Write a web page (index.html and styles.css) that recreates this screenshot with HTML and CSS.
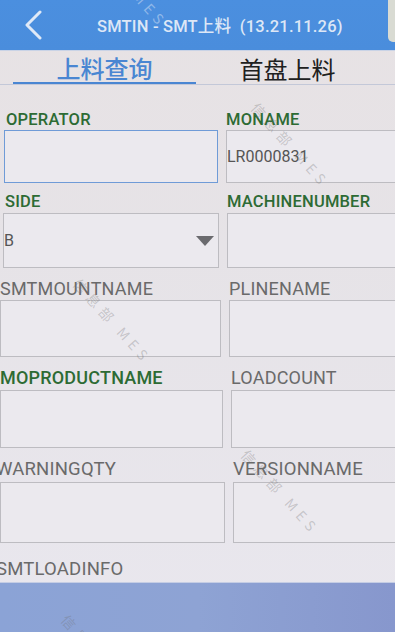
FILE: index.html
```html
<!DOCTYPE html>
<html lang="zh">
<head>
<meta charset="utf-8">
<title>SMTIN - SMT上料</title>
<link rel="stylesheet" href="styles.css">
</head>
<body>
<div class="screen">
  <header class="appbar">
    <svg class="back" width="20" height="30" viewBox="0 0 20 30" aria-hidden="true">
      <polyline points="16,2 3,15 16,28" fill="none" stroke="#dfe9f7" stroke-width="3" stroke-linecap="round" stroke-linejoin="round"/>
    </svg>
    <h1 class="title">SMTIN - SMT上料&nbsp; (13.21.11.26)</h1>
    <div class="bezel"></div>
  </header>

  <nav class="tabs">
    <div class="tab active">上料查询</div>
    <div class="tab">首盘上料</div>
  </nav>

  <main class="form">
    <div class="row">
      <div class="field"><div class="lbl req">OPERATOR</div><div class="box focus"></div></div>
      <div class="field"><div class="lbl req">MONAME</div><div class="box">LR0000831</div></div>
    </div>
    <div class="row">
      <div class="field"><div class="lbl req">SIDE</div><div class="box select">B<span class="caret"></span></div></div>
      <div class="field"><div class="lbl req">MACHINENUMBER</div><div class="box"></div></div>
    </div>
    <div class="row">
      <div class="field"><div class="lbl">SMTMOUNTNAME</div><div class="box"></div></div>
      <div class="field"><div class="lbl">PLINENAME</div><div class="box"></div></div>
    </div>
    <div class="row">
      <div class="field"><div class="lbl req">MOPRODUCTNAME</div><div class="box"></div></div>
      <div class="field"><div class="lbl">LOADCOUNT</div><div class="box"></div></div>
    </div>
    <div class="row">
      <div class="field"><div class="lbl">WARNINGQTY</div><div class="box"></div></div>
      <div class="field"><div class="lbl">VERSIONNAME</div><div class="box"></div></div>
    </div>
    <div class="section">SMTLOADINFO</div>
  </main>

  <div class="bottombar"></div>

  <div class="wm wm1">信息部 MES</div>
  <div class="wm wm2">信息部 MES</div>
  <div class="wm wm3">信息部 MES</div>
  <div class="wm wm4">信息部 MES</div>
  <div class="wm wm5">信息部 MES</div>
</div>
</body>
</html>
```

FILE: styles.css
```css
html, body {
  margin: 0;
  padding: 0;
}

body {
  width: 395px;
  height: 632px;
  overflow: hidden;
  font-family: Roboto, "Noto Sans CJK SC", sans-serif;
}

.screen {
  position: relative;
  width: 395px;
  height: 632px;
  display: flex;
  flex-direction: column;
  overflow: hidden;
  background: linear-gradient(180deg, #e7e2e4 0%, #e6e3e7 40%, #e9e7ee 100%);
}

/* App bar */
.appbar {
  position: relative;
  height: 50px;
  flex: none;
  display: flex;
  align-items: center;
  background: linear-gradient(180deg, #4b8fdf 0%, #4a8ddc 100%);
  border-bottom: 1px solid #c9d3e6;
}

.back {
  margin-left: 24px;
  flex: none;
}

.title {
  margin: 0 0 0 53px;
  font-size: 16.5px;
  font-weight: 500;
  color: #dde7f6;
  white-space: nowrap;
  letter-spacing: 0.2px;
}

.bezel {
  position: absolute;
  right: 0;
  top: 0;
  width: 7px;
  height: 42px;
  background: #d9dbd3;
  border-bottom-left-radius: 5px;
}

/* Tabs */
.tabs {
  flex: none;
  display: flex;
  padding: 4px 15px 0 13px;
  height: 29px;
  border-bottom: 1px solid #c3c8d8;
}

.tab {
  width: 183px;
  text-align: center;
  font-size: 24px;
  line-height: 28px;
  color: #202020;
  font-family: "Noto Sans CJK SC", sans-serif;
}

.tab.active {
  color: #4a86d2;
  border-bottom: 2px solid #4a86d2;
  height: 27px;
  line-height: 26px;
  font-weight: 500;
}

/* Form */
.form {
  flex: 1;
  padding-top: 25px;
  display: flex;
  flex-direction: column;
}

.row {
  display: grid;
  grid-template-columns: var(--c1) 200px;
  column-gap: 8px;
  padding-left: var(--pl);
  margin-bottom: var(--mb);
  --fs: 16.5px;
  --lh: 19px;
  --h: 53px;
  --c1: 214px;
  --pl: 4px;
  --mb: 9px;
}

.row:nth-child(2) { --fs: 16.5px; --lh: 20px; --h: 55px; --c1: 216px; --pl: 3px; --mb: 10px; }
.row:nth-child(3) { --fs: 18px; --lh: 21px; --h: 57px; --c1: 221px; --pl: 0px; --mb: 10px; }
.row:nth-child(4) { --fs: 18px; --lh: 22px; --h: 58px; --c1: 223px; --pl: 0px; --mb: 10px; }
.row:nth-child(5) { --fs: 18.5px; --lh: 23px; --h: 61px; --c1: 225px; --pl: 0px; --mb: 14px; }

.field {
  display: flex;
  flex-direction: column;
  min-width: 0;
}

.lbl {
  font-size: var(--fs);
  line-height: var(--lh);
  color: #6a6a6a;
  white-space: nowrap;
  margin-bottom: 1px;
  letter-spacing: 0.2px;
}

.row:nth-child(-n+2) .field:first-child .lbl { padding-left: 2px; }
.row:nth-child(5) .field:first-child .lbl { margin-left: -4px; }

.lbl.req {
  color: #2d6b34;
  font-weight: 500;
}

.box {
  height: var(--h);
  box-sizing: border-box;
  border: 1px solid #bdbcc1;
  background: #ebe9ee;
  display: flex;
  align-items: center;
  font-size: 16px;
  color: #555;
  position: relative;
}

.box.focus {
  border-color: #6f9bd7;
  border-width: 1.5px;
}

.caret {
  position: absolute;
  right: 4px;
  top: 50%;
  margin-top: -5px;
  width: 0;
  height: 0;
  border-left: 9px solid transparent;
  border-right: 9px solid transparent;
  border-top: 10px solid #6a6a6e;
}

.section {
  font-size: 18.5px;
  line-height: 25px;
  color: #6a6a6a;
  margin-left: -4px;
  letter-spacing: 0.2px;
}

/* Bottom bar */
.bottombar {
  flex: none;
  height: 51px;
  background: linear-gradient(90deg, #8ba3d6 0%, #8ea3d4 50%, #8797cd 100%);
  border-top: 1px solid #c5cde4;
}

/* Watermarks */
.wm {
  position: absolute;
  font-family: "Noto Sans CJK SC", sans-serif;
  font-size: 14px;
  letter-spacing: 5px;
  color: rgba(110, 110, 110, 0.3);
  white-space: nowrap;
  transform-origin: 0 0;
  transform: rotate(48deg);
}

.wm1 { left: 100px; top: -62px; color: rgba(230, 236, 248, 0.45); }
.wm2 { left: 262px; top: 98px; }
.wm3 { left: 84px; top: 274px; }
.wm4 { left: 252px; top: 445px; }
.wm5 { left: 72px; top: 610px; }
```
